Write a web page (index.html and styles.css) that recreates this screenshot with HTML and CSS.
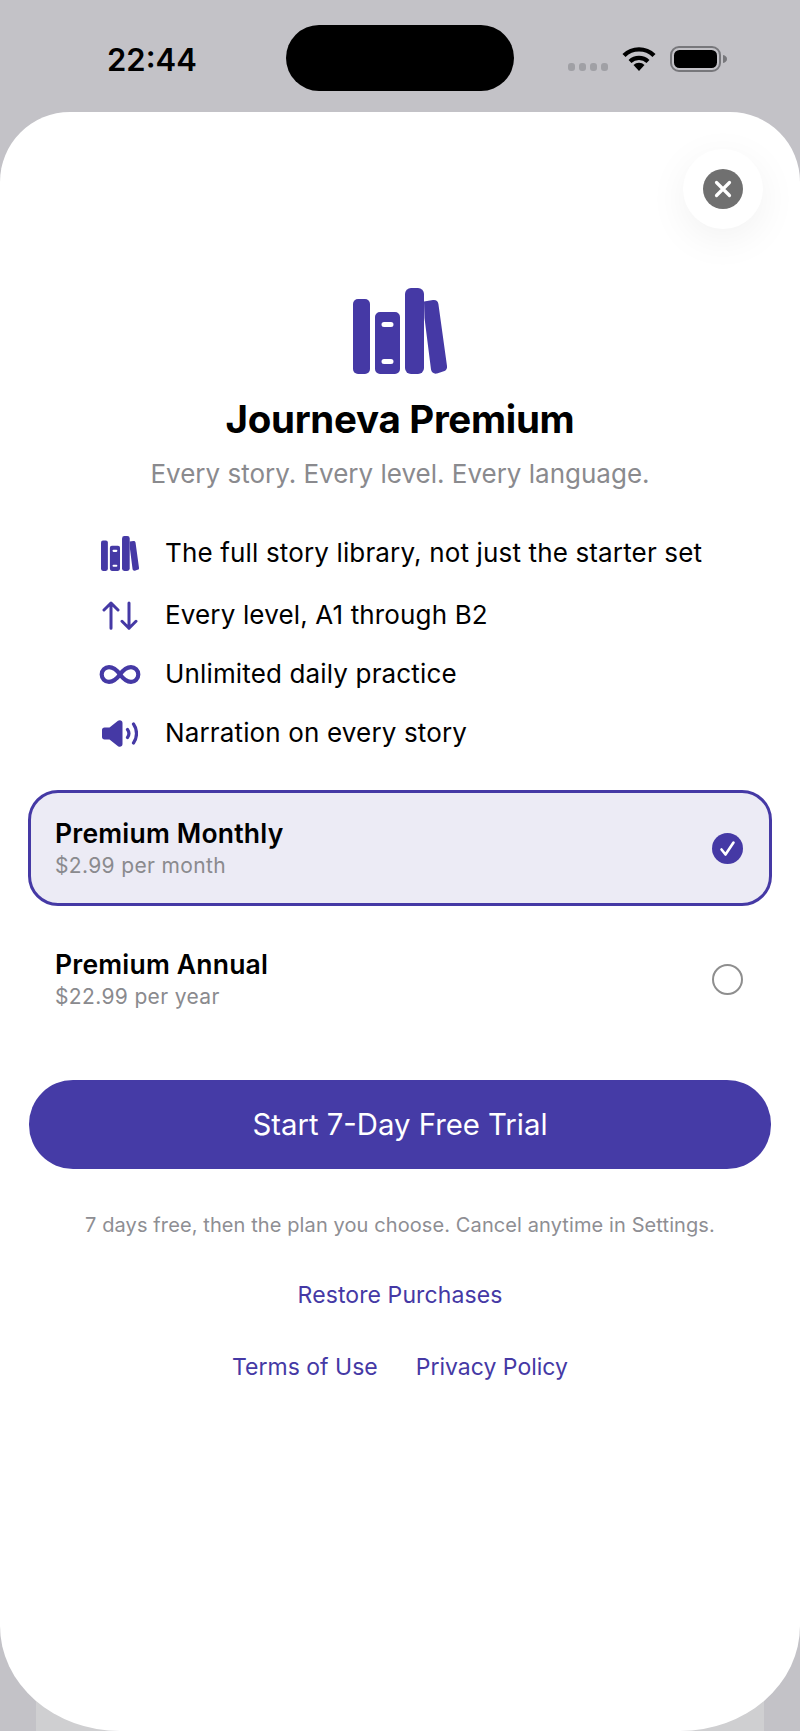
FILE: index.html
```html
<!DOCTYPE html>
<html lang="en">
<head>
  <meta charset="UTF-8">
  <title>Journeva Premium</title>
  <meta name="viewport" content="width=device-width, initial-scale=1.0"/>
  <link rel="stylesheet" href="styles.css">
</head>
<body>
  <svg class="defs" width="0" height="0">
    <symbol id="books" viewBox="0 0 94 86">
      <rect x="0" y="11" width="17" height="75" rx="5"/>
      <path fill-rule="evenodd" d="M27 24h15a5 5 0 0 1 5 5v52a5 5 0 0 1-5 5H27a5 5 0 0 1-5-5V29a5 5 0 0 1 5-5zm4 10a2.500 2.500 0 0 0 0 5h7a2.500 2.500 0 0 0 0-5zm0 37a2.500 2.500 0 0 0 0 5h7a2.500 2.500 0 0 0 0-5z"/>
      <rect x="52" y="0" width="19" height="86" rx="6"/>
      <path d="M71 13.500l9-1.500c3-.4 5 1 5.400 4L94 78c.4 3-1 5-4 5.500l-6 2c-3 .6-5.500-.8-6-4L71.500 30z"/>
    </symbol>
  </svg>

  <div class="status-bar">
    <span class="time">22:44</span>
    <div class="island"></div>
    <div class="signal">
      <span class="dot"></span><span class="dot"></span><span class="dot"></span><span class="dot"></span>
    </div>
    <svg class="wifi" viewBox="0 0 34 25" width="34" height="25">
      <path d="M2 9.500a21.500 21.500 0 0 1 30 0" fill="none" stroke="#000" stroke-width="4.400"/>
      <path d="M8 15.500a13 13 0 0 1 18 0" fill="none" stroke="#000" stroke-width="4.200"/>
      <path d="M11.500 19a7.800 7.800 0 0 1 11 0L17 25z"/>
    </svg>
    <svg class="battery" viewBox="0 0 57 26" width="57" height="26">
      <rect x="1" y="1" width="49" height="24" rx="8" fill="none" stroke="#77777b" stroke-width="2"/>
      <rect x="4" y="4" width="43" height="18" rx="5.500"/>
      <path d="M53 9c2.500.5 4 2 4 4s-1.500 3.500-4 4z" fill="#77777b"/>
    </svg>
  </div>

  <div class="sheet">
    <button class="close-btn">
      <span class="close-circle">
        <svg viewBox="0 0 20 20" width="20" height="20">
          <path d="M3.500 3.500l13 13M16.500 3.500l-13 13" stroke="#fff" stroke-width="3.200" stroke-linecap="round"/>
        </svg>
      </span>
    </button>

    <svg class="hero-icon" width="94" height="86"><use href="#books"/></svg>
    <h1>Journeva Premium</h1>
    <p class="subtitle">Every story. Every level. Every language.</p>

    <ul class="features">
      <li class="feature feature-first">
        <span class="feature-icon"><svg class="solid" width="38" height="35"><use href="#books"/></svg></span>
        The full story library, not just the starter set
      </li>
      <li class="feature">
        <span class="feature-icon">
          <svg viewBox="0 0 36 29" width="36" height="29" fill="none" stroke="#4539a5" stroke-width="3" stroke-linecap="round" stroke-linejoin="round">
            <path d="M9 27.300V2M2 9l7-7 7 7M27 2v25.300M20 20.300l7 7 7-7"/>
          </svg>
        </span>
        Every level, A1 through B2
      </li>
      <li class="feature">
        <span class="feature-icon">
          <svg viewBox="0 0 42 19" width="42" height="19" fill="none" stroke="#4539a5" stroke-width="4.200">
            <path d="M21 9.500C17 4 14 2.200 10 2.200a7.300 7.300 0 0 0 0 14.600c4 0 7-1.800 11-7.300s7-7.300 11-7.300a7.300 7.300 0 0 1 0 14.600c-4 0-7-1.800-11-7.300z"/>
          </svg>
        </span>
        Unlimited daily practice
      </li>
      <li class="feature">
        <span class="feature-icon">
          <svg class="solid" viewBox="0 0 36 27" width="36" height="27">
            <path d="M2.500 7.500h5L16 .8c2-1.300 4.500-.3 4.500 2.200v21c0 2.500-2.500 3.500-4.500 2.200l-8.500-6.700h-5C1 19.500 0 18.500 0 17v-7c0-1.500 1-2.500 2.500-2.500z"/>
            <path d="M25.500 9.500c1.800 2.500 1.800 5.500 0 8M31.500 4c4 5.500 4 13.500 0 19" fill="none" stroke="#4539a5" stroke-width="3.200" stroke-linecap="round"/>
          </svg>
        </span>
        Narration on every story
      </li>
    </ul>

    <div class="plans">
      <div class="plan plan-selected">
        <div>
          <div class="plan-name">Premium Monthly</div>
          <div class="plan-price">$2.99 per month</div>
        </div>
        <span class="check">
          <svg viewBox="0 0 31 31" width="31" height="31">
            <path d="M9.500 16.500l4 5 8-12" fill="none" stroke="#fff" stroke-width="2.600" stroke-linecap="round" stroke-linejoin="round"/>
          </svg>
        </span>
      </div>
      <div class="plan">
        <div>
          <div class="plan-name">Premium Annual</div>
          <div class="plan-price">$22.99 per year</div>
        </div>
        <span class="radio"></span>
      </div>
    </div>

    <button class="cta">Start 7-Day Free Trial</button>
    <p class="note">7 days free, then the plan you choose. Cancel anytime in Settings.</p>
    <a class="link restore" href="#">Restore Purchases</a>
    <div class="legal">
      <a class="link" href="#">Terms of Use</a>
      <a class="link" href="#">Privacy Policy</a>
    </div>
  </div>
</body>
</html>
```

FILE: styles.css
```css
* {
  box-sizing: border-box;
}

html, body {
  height: 100%;
}

body {
  margin: 0;
  position: relative;
  font-family: Inter, "Noto Sans", Arial, sans-serif;
  background: #c3c2c7;
  color: #000;
  display: flex;
  flex-direction: column;
  overflow: hidden;
}

/* lighter strip showing under the sheet's bottom corners */
body::before {
  content: "";
  position: absolute;
  left: 36px;
  right: 36px;
  bottom: 0;
  height: 31px;
  background: #cfcfd1;
}

.defs {
  position: absolute;
}

/* Status bar */
.status-bar {
  height: 112px;
  flex: none;
  display: flex;
  align-items: flex-start;
  padding-left: 107px;
}

.time {
  width: 89px;
  margin-top: 41px;
  font-size: 31px;
  line-height: 38px;
  font-weight: 600;
  white-space: nowrap;
}

.island {
  width: 228px;
  height: 66px;
  margin: 25px 0 0 90px;
  border-radius: 33px;
  background: #000;
}

.signal {
  display: flex;
  gap: 4px;
  margin: 63px 0 0 54px;
}

.dot {
  width: 7px;
  height: 8px;
  border-radius: 3px;
  background: #a0a0a5;
}

.wifi {
  margin: 46px 0 0 14px;
}

.battery {
  margin: 46px 0 0 14px;
}

/* Sheet */
.sheet {
  flex: 1;
  position: relative;
  display: flex;
  flex-direction: column;
  align-items: center;
  padding: 176px 28px 0;
  background: #fff;
  border-radius: 70px 70px 120px 120px / 70px 70px 105px 105px;
}

.close-btn {
  position: absolute;
  top: 37px;
  right: 37px;
  width: 80px;
  height: 80px;
  padding: 0;
  border: none;
  border-radius: 50%;
  background: #fff;
  box-shadow: 0 10px 40px rgba(0,0,0,0.06);
  display: flex;
  align-items: center;
  justify-content: center;
}

.close-circle {
  width: 40px;
  height: 40px;
  border-radius: 50%;
  background: #707070;
  display: flex;
  align-items: center;
  justify-content: center;
}

.hero-icon,
.solid {
  fill: #4539a5;
  flex: none;
}

h1 {
  margin: 22px 0 0;
  font-size: 38.500px;
  line-height: 46px;
  font-weight: 700;
  letter-spacing: -0.3px;
}

.subtitle {
  margin: 16px 0 0;
  font-size: 26px;
  line-height: 32px;
  color: #8a8a8e;
}

/* Feature list */
.features {
  list-style: none;
  align-self: stretch;
  margin: 44px 0 0;
  padding: 0 0 0 71px;
  display: flex;
  flex-direction: column;
  gap: 27px;
}

.feature {
  display: flex;
  align-items: center;
  height: 32px;
  font-size: 26px;
  line-height: 32px;
  letter-spacing: 0.15px;
}

.feature-first {
  height: 38px;
}

.feature-icon {
  width: 42px;
  margin-right: 24px;
  flex: none;
  display: flex;
  align-items: center;
  justify-content: center;
}

/* Plans */
.plans {
  align-self: stretch;
  margin-top: 41px;
  display: flex;
  flex-direction: column;
  gap: 15px;
}

.plan {
  height: 116px;
  padding: 0 26px 0 24px;
  border: 3px solid transparent;
  border-radius: 30px;
  display: flex;
  align-items: center;
  justify-content: space-between;
}

.plan-selected {
  background: #ecebf5;
  border-color: #4539a5;
}

.plan-name {
  font-size: 26.500px;
  line-height: 34px;
  font-weight: 600;
  letter-spacing: 0.2px;
}

.plan-price {
  margin-top: 2px;
  font-size: 21px;
  line-height: 28px;
  letter-spacing: 0.35px;
  color: #8a8a8e;
}

.check {
  width: 31px;
  height: 31px;
  border-radius: 50%;
  background: #4539a5;
  display: flex;
}

.radio {
  width: 31px;
  height: 31px;
  border-radius: 50%;
  border: 2.500px solid #8e8e8e;
}

/* Bottom actions */
.cta {
  align-self: stretch;
  height: 89px;
  margin: 43px 1px 0;
  border: none;
  border-radius: 44px;
  background: #453ba6;
  color: #fff;
  font-family: inherit;
  font-size: 29.300px;
}

.note {
  margin: 42px 0 0;
  font-size: 20px;
  line-height: 28px;
  letter-spacing: 0.1px;
  color: #8e8e93;
  white-space: nowrap;
}

.link {
  font-size: 23px;
  line-height: 30px;
  color: #4539a5;
  text-decoration: none;
}

.restore {
  margin-top: 41px;
  letter-spacing: 0.1px;
}

.legal {
  margin-top: 42px;
  display: flex;
  gap: 38px;
}
```
